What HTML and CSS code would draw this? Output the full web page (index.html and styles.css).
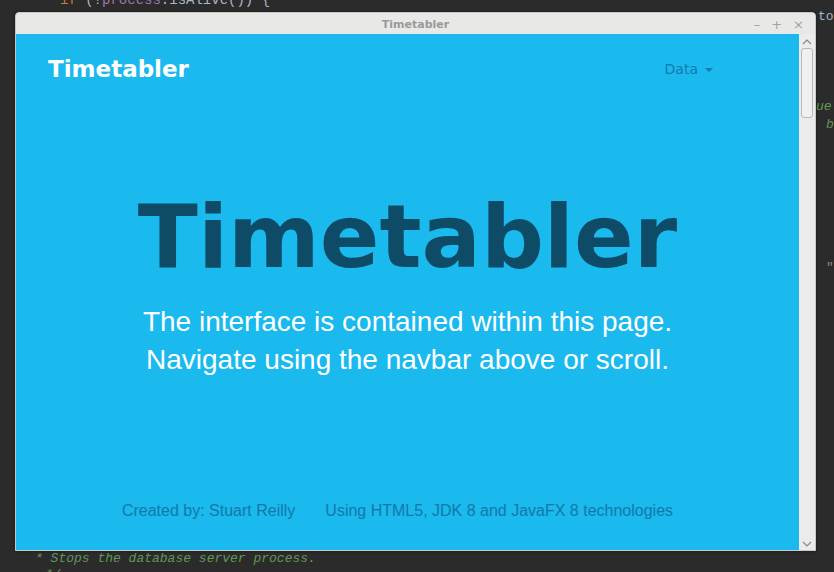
FILE: index.html
```html
<!DOCTYPE html>
<html>
<head>
<meta charset="utf-8">
<title>Timetabler</title>
<link rel="stylesheet" href="styles.css">
</head>
<body>
<div class="desktop">
  <div class="code code-top"><span class="kw">if</span> (!<span class="var">process</span>.isAlive()) {</div>
  <div class="code code-r1">to</div>
  <div class="code code-r2 cm">ue</div>
  <div class="code code-r3 cm">b</div>
  <div class="code code-r4">"</div>
  <div class="code code-b1 cm">* Stops the database server process.</div>
  <div class="code code-b2 cm">*/</div>

  <div class="window">
    <div class="titlebar">
      <span class="title">Timetabler</span>
      <div class="controls"><span>&#8211;</span><span>+</span><span>&#215;</span></div>
    </div>
    <div class="client">
      <div class="page">
        <nav class="navbar">
          <span class="brand">Timetabler</span>
          <span class="menu">Data <span class="caret"></span></span>
        </nav>
        <header class="hero">
          <h1>Timetabler</h1>
          <p>The interface is contained within this page.<br>Navigate using the navbar above or scroll.</p>
        </header>
        <footer class="footer">
          <span>Created by: Stuart Reilly</span>
          <span>Using HTML5, JDK 8 and JavaFX 8 technologies</span>
        </footer>
      </div>
      <div class="scrollbar">
        <svg class="arrow" width="12" height="8" viewBox="0 0 12 8"><path d="M2 6 L6 2 L10 6" fill="none" stroke="#888" stroke-width="1.2"/></svg>
        <div class="track"><div class="thumb"></div></div>
        <svg class="arrow" width="12" height="8" viewBox="0 0 12 8"><path d="M2 2 L6 6 L10 2" fill="none" stroke="#888" stroke-width="1.2"/></svg>
      </div>
    </div>
  </div>
</div>
</body>
</html>
```
FILE: styles.css
```css
* { box-sizing: border-box; }
html, body { margin: 0; padding: 0; }
body {
  width: 834px;
  height: 572px;
  overflow: hidden;
  background: #2b2b2b;
  font-family: "Liberation Sans", Arial, sans-serif;
}
.desktop {
  position: relative;
  width: 834px;
  height: 572px;
  overflow: hidden;
}
.code {
  position: absolute;
  font-family: "Liberation Mono", "DejaVu Sans Mono", monospace;
  font-size: 13px;
  line-height: 16px;
  color: #a9b7c6;
  white-space: pre;
}
.code .kw { color: #cc7832; }
.code .var { color: #9876aa; }
.cm { color: #629755; font-style: italic; }
.code-top { left: 60px; top: -8px; font-size: 14px; }
.code-r1 { left: 818px; top: 9px; }
.code-r2 { left: 816px; top: 99px; }
.code-r3 { left: 826px; top: 117px; }
.code-r4 { left: 826px; top: 260px; color: #8a8a8a; }
.code-b1 { left: 35px; top: 551px; }
.code-b2 { left: 45px; top: 567px; }

.window {
  position: absolute;
  left: 15px;
  top: 12px;
  width: 801px;
  height: 539px;
  display: flex;
  flex-direction: column;
  background: #e8e8e7;
  border: 1px solid #c9c9c9;
  border-radius: 4px 4px 0 0;
  box-shadow: 0 0 3px rgba(0,0,0,0.5);
}
.titlebar {
  height: 21px;
  flex: none;
  display: flex;
  align-items: center;
  justify-content: center;
  position: relative;
}
.title {
  font-family: "DejaVu Sans", sans-serif;
  font-size: 11px;
  font-weight: bold;
  color: #9a9a9a;
  padding-top: 2px;
}
.controls {
  position: absolute;
  right: 11px;
  top: 4px;
  display: flex;
  gap: 11px;
  font-family: "DejaVu Sans", sans-serif;
  font-size: 13px;
  color: #a2a2a2;
  line-height: 16px;
}
.client {
  flex: 1;
  display: flex;
  min-height: 0;
}
.page {
  flex: 1;
  background: #1ab9ee;
  display: flex;
  flex-direction: column;
}
.navbar {
  display: flex;
  justify-content: space-between;
  align-items: center;
  padding: 20px 86px 0 32px;
  height: 49px;
}
.brand {
  font-family: "DejaVu Sans", sans-serif;
  font-weight: 700;
  font-size: 23px;
  color: #ffffff;
}
.menu {
  font-family: "DejaVu Sans", sans-serif;
  font-size: 14px;
  color: #1479b0;
  display: flex;
  align-items: center;
  gap: 7px;
}
.caret {
  width: 0;
  height: 0;
  border-left: 4px solid transparent;
  border-right: 4px solid transparent;
  border-top: 4px solid #1479b0;
  margin-top: 2px;
}
.hero {
  text-align: center;
  padding-top: 109px;
}
.hero h1 {
  margin: 0;
  font-family: "DejaVu Sans", sans-serif;
  font-weight: 700;
  font-size: 88px;
  line-height: 90px;
  color: #0d4b67;
}
.hero p {
  margin: 21px 0 0;
  font-size: 28px;
  line-height: 38px;
  color: #ffffff;
}
.footer {
  margin-top: auto;
  display: flex;
  justify-content: center;
  gap: 30px;
  padding: 0 20px 30px 0;
  font-size: 16px;
  color: #1378a8;
}
.scrollbar {
  width: 16px;
  flex: none;
  background: #ebebeb;
  display: flex;
  flex-direction: column;
  align-items: center;
  padding: 4px 0 2px;
}
.arrow { flex: none; }
.track {
  flex: 1;
  width: 100%;
  padding: 2px 2px;
}
.thumb {
  width: 12px;
  height: 70px;
  border: 1px solid #b9b9b9;
  border-radius: 3px;
  background: #f0f0f0;
}
```
